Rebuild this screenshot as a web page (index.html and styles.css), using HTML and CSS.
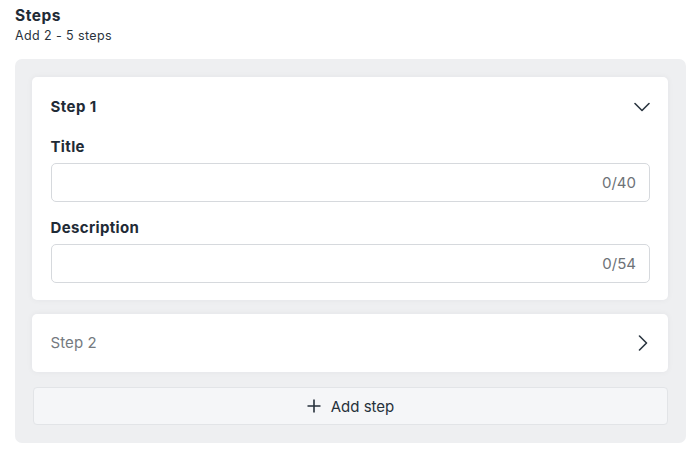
FILE: index.html
```html
<!DOCTYPE html>
<html>
<head>
<meta charset="utf-8">
<link rel="stylesheet" href="styles.css">
</head>
<body>
<div class="page">
  <div class="head">
    <div class="title">Steps</div>
    <div class="sub">Add 2 - 5 steps</div>
  </div>
  <div class="panel">
    <div class="card open">
      <div class="card-head">
        <span class="step-name">Step 1</span>
        <svg class="chev" width="16" height="10" viewBox="0 0 16 10"><path d="M1 1.5 L8 8.5 L15 1.5" fill="none" stroke="#2b3640" stroke-width="1.6" stroke-linecap="round" stroke-linejoin="round"/></svg>
      </div>
      <div class="field">
        <label class="label">Title</label>
        <div class="input"><span class="count">0/40</span></div>
      </div>
      <div class="field">
        <label class="label">Description</label>
        <div class="input"><span class="count">0/54</span></div>
      </div>
    </div>
    <div class="card closed">
      <span class="step-name muted">Step 2</span>
      <svg class="chev" width="10" height="16" viewBox="0 0 10 16"><path d="M1.5 1 L8.5 8 L1.5 15" fill="none" stroke="#2b3640" stroke-width="1.6" stroke-linecap="round" stroke-linejoin="round"/></svg>
    </div>
    <div class="add">
      <svg width="14" height="14" viewBox="0 0 14 14"><path d="M7 0.5 V13.5 M0.5 7 H13.5" fill="none" stroke="#26313b" stroke-width="1.6"/></svg>
      <span>Add step</span>
    </div>
  </div>
</div>
</body>
</html>
```

FILE: styles.css
```css
html, body {
  margin: 0;
  padding: 0;
  background: #ffffff;
}
body {
  font-family: Inter, "Noto Sans", sans-serif;
  color: #1f2b36;
}
.page {
  padding: 6px 14px 0 15px;
}
.head .title {
  font-size: 15.5px;
  font-weight: 700;
  line-height: 20px;
  letter-spacing: 0.5px;
}
.head .sub {
  font-size: 12.5px;
  line-height: 18px;
  margin-top: 1px;
  letter-spacing: 0.4px;
  color: #2a333c;
}
.panel {
  margin-top: 14px;
  background: #eeeff1;
  border-radius: 7px;
  padding: 18px 18px 18px 17px;
  display: flex;
  flex-direction: column;
}
.card {
  background: #ffffff;
  border-radius: 5px;
  box-shadow: 0 0 6px rgba(40, 40, 60, 0.05);
}
.card.open {
  padding: 18px 18px 17px 18.5px;
}
.card-head {
  display: flex;
  align-items: center;
  justify-content: space-between;
  height: 24px;
  margin-bottom: 18px;
}
.step-name {
  font-size: 15px;
  font-weight: 700;
  line-height: 24px;
  letter-spacing: 0.45px;
}
.step-name.muted {
  font-weight: 400;
  letter-spacing: 0.1px;
  color: #757a80;
}
.chev {
  display: block;
  margin-right: 0;
}
.field + .field {
  margin-top: 16px;
}
.label {
  display: block;
  font-size: 15px;
  font-weight: 700;
  line-height: 20px;
  letter-spacing: 0.35px;
  margin-bottom: 6px;
}
.input {
  height: 39px;
  box-sizing: border-box;
  border: 1px solid #d6d9dd;
  border-radius: 5px;
  display: flex;
  align-items: center;
  justify-content: flex-end;
  padding: 0 13px;
}
.count {
  font-size: 15px;
  color: #6d7277;
}
.card.closed {
  margin-top: 14px;
  height: 58px;
  box-sizing: border-box;
  padding: 0 20px 0 18.5px;
  display: flex;
  align-items: center;
  justify-content: space-between;
}
.add {
  margin-top: 15px;
  height: 38px;
  box-sizing: border-box;
  margin-left: 1px;
  background: #f5f6f8;
  border: 1px solid #e2e4e7;
  border-radius: 4px;
  display: flex;
  align-items: center;
  justify-content: center;
  gap: 10px;
  font-size: 15px;
  color: #26313b;
}
.add svg {
  display: block;
}
```
